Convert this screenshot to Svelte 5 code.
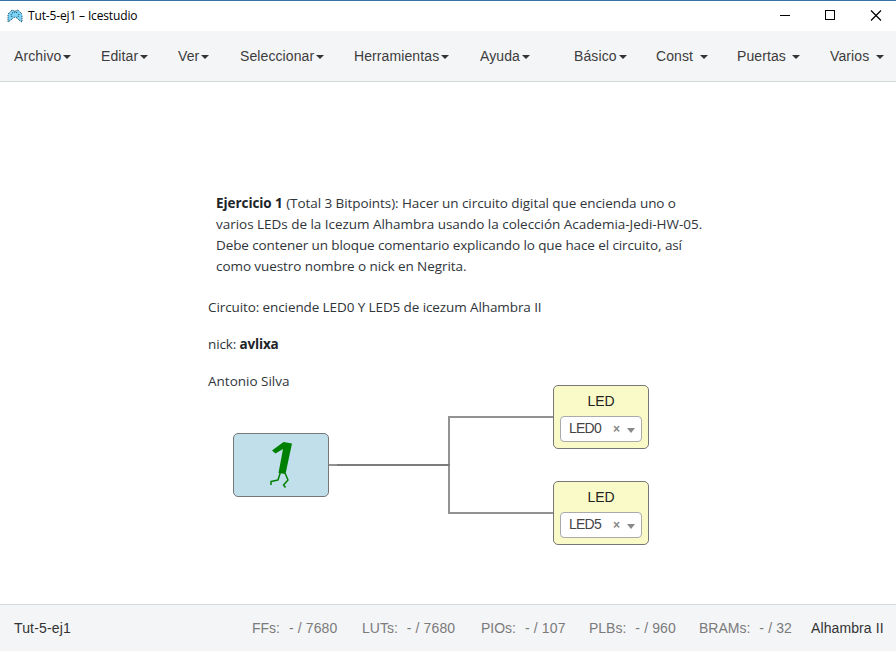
<script>
  const menus = [
    { label: 'Archivo', width: 87 },
    { label: 'Editar', width: 77 },
    { label: 'Ver', width: 62 },
    { label: 'Seleccionar', width: 114 },
    { label: 'Herramientas', width: 126 },
    { label: 'Ayuda', width: 94 },
    { label: 'Básico', width: 82 },
    { label: 'Const', width: 81, spaced: true },
    { label: 'Puertas', width: 93, spaced: true },
    { label: 'Varios', width: 60, spaced: true }
  ];
  const resources = [
    { label: 'FFs:', value: '- / 7680', width: 110 },
    { label: 'LUTs:', value: '- / 7680', width: 119 },
    { label: 'PIOs:', value: '- / 107', width: 108 },
    { label: 'PLBs:', value: '- / 960', width: 110 },
    { label: 'BRAMs:', value: '- / 32', width: 112 }
  ];
  const leds = [
    { pin: 'LED0', x: 553, y: 303 },
    { pin: 'LED5', x: 553, y: 399 }
  ];
</script>

<div class="app">
  <header class="titlebar">
    <svg class="logo" width="16" height="16" viewBox="0 0 16 16">
      <path d="M1 6 5 2l2 1h2l2-1 4 4v8l-3-2-2-2-2-1-2 1-2 2-3 2z" fill="#7bd3f5" />
      <path d="M1 6l4-4 2 1h2l2-1 4 4M1 7v7l3-2 2-2 2-1 2 1 2 2 3 2V7M4 6l1 3M12 6l-1 3M5 5l3-1 3 1" fill="none" stroke="#24566c" stroke-dasharray="1.300 .8" />
    </svg>
    <span class="title">Tut-5-ej1 – Icestudio</span>
    <svg class="controls" width="102" height="12" viewBox="0 0 102 12" fill="none" stroke="#000" shape-rendering="crispEdges">
      <path d="M0 5.500h10M45.500 .5h9v9h-9z" />
      <path d="M91 .5l10 10M101 .5l-10 10" stroke-width="1.200" shape-rendering="auto" />
    </svg>
  </header>

  <nav>
    {#each menus as m}
      <div class="menu" style:width="{m.width}px">
        <span>{m.label}</span><i class="caret" class:spaced={m.spaced}></i>
      </div>
    {/each}
  </nav>

  <main>
    <svg class="wires" width="896" height="522" viewBox="0 0 896 522" fill="none" stroke="#929292" stroke-width="2">
      <path d="M329 383H449M553 335H449V431H553" />
      <path d="M337 383H450" stroke="#7c7c7c" />
    </svg>

    <div class="note">
      <div class="exercise">
        <div class="l1"><b>Ejercicio 1</b> (Total 3 Bitpoints): Hacer un circuito digital que encienda uno o</div>
        <div class="l2">varios LEDs de la Icezum Alhambra usando la colección Academia-Jedi-HW-05.</div>
        <div class="l3">Debe contener un bloque comentario explicando lo que hace el circuito, así</div>
        <div class="l4">como vuestro nombre o nick en Negrita.</div>
      </div>
      <p>Circuito: enciende LED0 Y LED5 de icezum Alhambra II</p>
      <p class="nick">nick: <b>avlixa</b></p>
      <p class="author">Antonio Silva</p>
    </div>

    <div class="block one">
      <svg width="94" height="62" viewBox="0 0 94 62">
        <path d="M38 16.500 49.500 8 58 9.500 51.500 40 44.500 39 49 15 41.500 19.500z" fill="#008000" />
        <path d="M46.500 38 44 46 37 47.500 37 51M51 39 54 46 49.500 51 51.500 53.500" fill="none" stroke="#008000" stroke-width="1.500" stroke-linejoin="round" />
      </svg>
    </div>

    {#each leds as led}
      <div class="block led" style:left="{led.x}px" style:top="{led.y}px">
        <span class="name">LED</span>
        <div class="select">
          <span class="pin">{led.pin}</span><span class="clear">×</span><i class="arrow"></i>
        </div>
      </div>
    {/each}
  </main>

  <footer>
    <span class="project">Tut-5-ej1</span>
    {#each resources as r}
      <div class="resource" style:width="{r.width}px"><span>{r.label}</span><span class="value">{r.value}</span></div>
    {/each}
    <span class="board">Alhambra II</span>
  </footer>
</div>

<style>
  :global(body) { background: #fff; }
  .app {
    box-sizing: border-box;
    width: 896px;
    height: 651px;
    display: flex;
    flex-direction: column;
    overflow: hidden;
    font: 14px/20px "Liberation Sans", Arial, sans-serif;
    color: #333;
    white-space: nowrap;
  }
  .titlebar {
    box-sizing: border-box;
    height: 31px;
    display: flex;
    align-items: center;
    border-top: 1px solid #3874a5;
    padding: 0 14px 0 7px;
  }
  .title { margin-left: 5px; flex: 1; font: 12px/16px "Open Sans", "Noto Sans", sans-serif; letter-spacing: -.15px; color: #000; }
  .controls { overflow: visible; }
  nav {
    box-sizing: border-box;
    height: 51px;
    display: flex;
    align-items: center;
    padding-left: 14px;
    background: #f4f5f7;
    border-bottom: 1px solid #d3dad9;
  }
  .menu { flex: none; display: flex; align-items: center; letter-spacing: .1px; color: #3c3c3c; }
  .caret { margin-left: 2px; margin-top: 1px; border: 4px solid transparent; border-top-color: #333; border-bottom: 0; }
  .caret.spaced { margin-left: 6.500px; }
  main { position: relative; height: 522px; }
  .wires { position: absolute; inset: 0; }
  .note {
    padding: 111px 0 0 208px;
    font: 13.500px/21px "Open Sans", "Noto Sans", sans-serif;
    letter-spacing: -.1px;
    color: #30353a;
  }
  .exercise { padding-left: 8px; margin-bottom: 20px; }
  .l1 { letter-spacing: -.07px; }
  .l2 { letter-spacing: -.03px; }
  .l4 { letter-spacing: -.07px; }
  p { margin: 0 0 16px; }
  .nick { letter-spacing: -.15px; }
  .author { letter-spacing: 0; }
  b { color: #202428; }
  .block { box-sizing: border-box; position: absolute; width: 96px; height: 64px; border: 1px solid #777; border-radius: 5px; }
  .one { left: 233px; top: 351px; background: #c0dfeb; }
  .one svg { display: block; }
  .led { display: flex; flex-direction: column; align-items: center; padding-top: 5px; background: #fafac8; }
  .name { color: #222; }
  .select {
    box-sizing: border-box;
    width: 82px;
    height: 26px;
    margin-top: 5px;
    padding: 0 6px 0 8px;
    display: flex;
    align-items: center;
    background: #fff;
    border: 1px solid #aaa;
    border-radius: 4px;
    color: #444;
  }
  .pin { flex: 1; letter-spacing: -.75px; padding-bottom: 2px; }
  .clear { font-size: 12px; font-weight: bold; color: #888; margin-right: 7px; }
  .arrow { margin-top: 3px; border: 4px solid transparent; border-top: 5px solid #888; border-bottom: 0; }
  footer {
    box-sizing: border-box;
    height: 47px;
    display: flex;
    align-items: center;
    padding-left: 14px;
    padding-bottom: 1px;
    background: #f4f5f7;
    border-top: 1px solid #d3dad9;
  }
  .project { width: 238px; letter-spacing: .15px; }
  .resource { display: flex; gap: 9px; color: #7b7b7b; }
  .value { letter-spacing: .12px; }
  .board { letter-spacing: .1px; }
</style>
